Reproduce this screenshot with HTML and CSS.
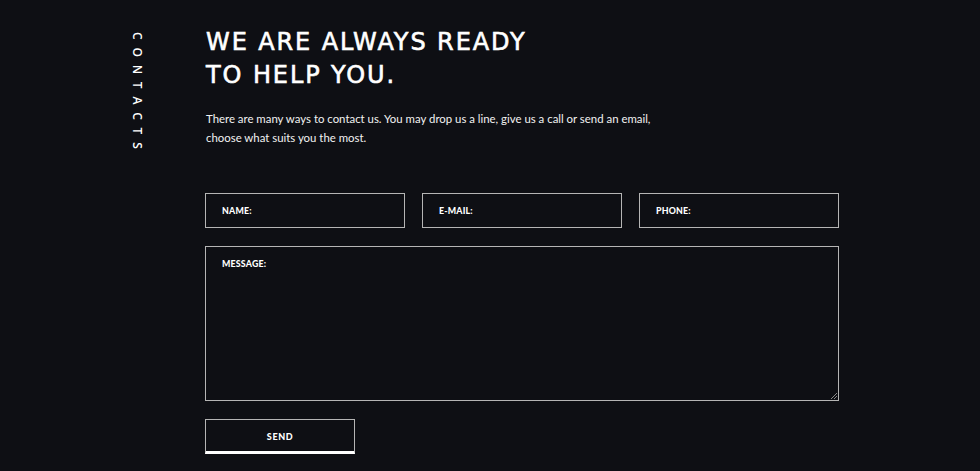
FILE: index.html
```html
<!DOCTYPE html>
<html>
<head>
<meta charset="utf-8">
<link rel="stylesheet" href="styles.css">
</head>
<body>
<div class="page">
  <div class="side"><span class="side-label">CONTACTS</span></div>
  <div class="main">
    <h1 class="title">WE ARE ALWAYS READY<br>TO HELP YOU.</h1>
    <p class="intro">There are many ways to contact us. You may drop us a line, give us a call or send an email,<br>choose what suits you the most.</p>
    <form class="form">
      <div class="row">
        <div class="field">NAME:</div>
        <div class="field">E-MAIL:</div>
        <div class="field">PHONE:</div>
      </div>
      <div class="field message">MESSAGE:<span class="grip"></span></div>
      <div class="send">SEND</div>
    </form>
  </div>
</div>
</body>
</html>
```
FILE: styles.css
```css
html, body {
  margin: 0;
  padding: 0;
  background: #0e0f14;
  height: 100%;
}
body {
  color: #fff;
  font-family: "Lato", "Open Sans", sans-serif;
}
.page {
  display: flex;
  padding-left: 131px;
  padding-top: 26px;
}
.side {
  width: 74px;
  flex: none;
  padding-top: 6px;
}
.side-label {
  display: block;
  writing-mode: vertical-rl;
  font-family: "Open Sans", sans-serif;
  font-size: 12px;
  letter-spacing: 7.8px;
  font-weight: 600;
  line-height: 12px;
}
.main {
  width: 634px;
}
.title {
  margin: 0 0 0 1px;
  font-family: "DejaVu Sans", sans-serif;
  font-weight: 400;
  font-size: 24px;
  line-height: 33px;
  letter-spacing: 1.9px;
  -webkit-text-stroke: 0.6px #fff;
}
.intro {
  margin: 17px 0 0 1px;
  font-family: "Lato", sans-serif;
  font-size: 11.4px;
  line-height: 19px;
  color: #f2f2f2;
}
.form {
  margin-top: 46px;
  display: flex;
  flex-direction: column;
  gap: 18px;
}
.row {
  display: flex;
  gap: 17px;
}
.field {
  box-sizing: border-box;
  flex: 1;
  height: 35px;
  border: 1px solid #b5b5b5;
  padding: 11px 16px 0;
  font-family: "Lato", sans-serif;
  font-weight: 900;
  font-size: 8.8px;
  letter-spacing: 0.2px;
}
.message {
  flex: none;
  position: relative;
  height: 155px;
  padding-top: 11px;
}
.grip {
  position: absolute;
  right: 1px;
  bottom: 1px;
  width: 6px;
  height: 6px;
  background: linear-gradient(135deg, transparent 45%, #888 45%, #888 55%, transparent 55%, transparent 70%, #888 70%, #888 80%, transparent 80%);
}
.send {
  box-sizing: border-box;
  width: 150px;
  height: 35px;
  border: 1px solid #b5b5b5;
  border-bottom: 3px solid #fff;
  text-align: center;
  padding-top: 11px;
  font-family: "Lato", sans-serif;
  font-weight: 900;
  font-size: 9px;
  letter-spacing: 0.6px;
}
```
